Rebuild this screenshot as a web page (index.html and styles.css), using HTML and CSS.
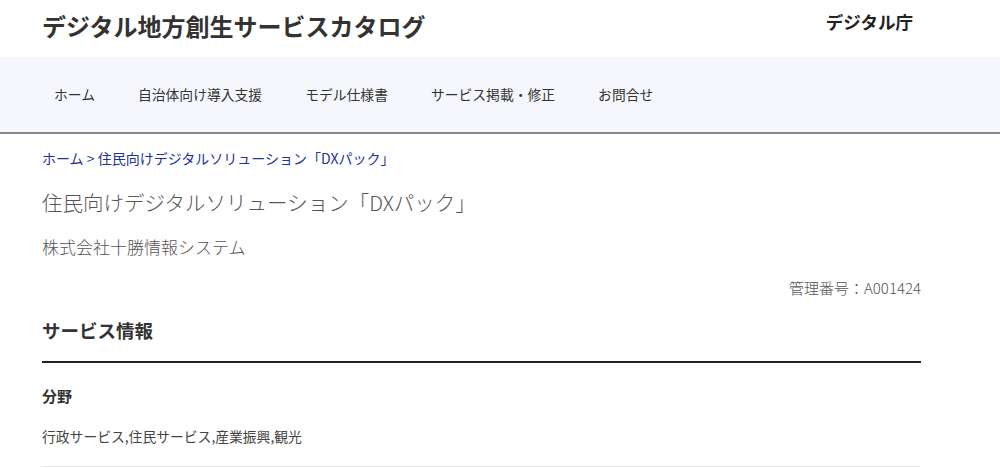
FILE: index.html
```html
<!DOCTYPE html>
<html lang="ja">
<head>
    <meta charset="UTF-8">
    <meta name="viewport" content="width=device-width, initial-scale=1.0">
    <title>住民向けデジタルソリューション「DXパック」 | デジタル地方創生サービスカタログ</title>
    <link rel="stylesheet" href="styles.css">
</head>
<body>

    <!-- Header -->
    <header class="site-header">
        <div class="header-inner">
            <h1 class="site-title">デジタル地方創生サービスカタログ</h1>
            <p class="agency">デジタル庁</p>
        </div>
    </header>

    <!-- Global Nav -->
    <nav class="global-nav">
        <ul class="nav-list">
            <li><a href="#">ホーム</a></li>
            <li><a href="#">自治体向け導入支援</a></li>
            <li><a href="#">モデル仕様書</a></li>
            <li><a href="#">サービス掲載・修正</a></li>
            <li><a href="#">お問合せ</a></li>
        </ul>
    </nav>

    <main class="container">
        <p class="breadcrumb"><a href="#">ホーム</a> &gt; <a href="#">住民向けデジタルソリューション「DXパック」</a></p>

        <h2 class="service-name">住民向けデジタルソリューション「DXパック」</h2>
        <p class="company">株式会社十勝情報システム</p>
        <p class="control-no">管理番号：A001424</p>

        <section class="info">
            <h3 class="info-title">サービス情報</h3>
            <dl class="info-item">
                <dt>分野</dt>
                <dd>行政サービス,住民サービス,産業振興,観光</dd>
            </dl>
        </section>
    </main>

</body>
</html>
```

FILE: styles.css
```css
/* Base */
body {
    margin: 0;
    font-family: "Noto Sans CJK JP", "Noto Sans", sans-serif;
    color: #333;
    background: #fff;
}

a {
    text-decoration: none;
    color: inherit;
}

/* Header */
.header-inner {
    width: 879px;
    margin-left: 42px;
    height: 57px;
    display: flex;
    justify-content: space-between;
    align-items: flex-start;
}

.site-title {
    margin: 8px 0 0;
    font-size: 24px;
    font-weight: bold;
    line-height: 36px;
    color: #333;
}

.agency {
    margin: 9px 8px 0 0;
    font-size: 17.5px;
    font-weight: bold;
    line-height: 26px;
    color: #222;
}

/* Global Nav */
.global-nav {
    background: #f5f7fc;
    border-bottom: 2px solid #8a8a8a;
}

.nav-list {
    list-style: none;
    margin: 0;
    padding: 0 0 4px 54px;
    height: 71px;
    display: flex;
    align-items: center;
    gap: 43px;
}

.nav-list a {
    font-size: 13.8px;
    color: #333;
}

/* Content */
.container {
    width: 879px;
    margin-left: 42px;
}

.breadcrumb {
    margin: 14px 0 0;
    font-size: 14px;
    line-height: 20px;
    color: #23319a;
}

.service-name {
    margin: 19px 0 0;
    font-size: 20.5px;
    font-weight: 300;
    line-height: 30px;
    color: #555;
}

.company {
    margin: 17px 0 0;
    font-size: 17px;
    font-weight: 300;
    line-height: 26px;
    color: #555;
}

.control-no {
    margin: 16px 0 0;
    text-align: right;
    font-size: 15px;
    font-weight: 300;
    line-height: 24px;
    color: #555;
}

.info-title {
    margin: 16px 0 0;
    padding-bottom: 17px;
    font-size: 18.5px;
    font-weight: bold;
    line-height: 28px;
    border-bottom: 2px solid #222;
}

.info-item {
    margin: 0;
    padding: 22px 0 19px;
    border-bottom: 1px solid #e8e8e8;
}

.info-item dt {
    font-size: 15px;
    font-weight: bold;
    line-height: 22px;
}

.info-item dd {
    margin: 18px 0 0;
    font-size: 13.8px;
    line-height: 22px;
    color: #444;
}
```
